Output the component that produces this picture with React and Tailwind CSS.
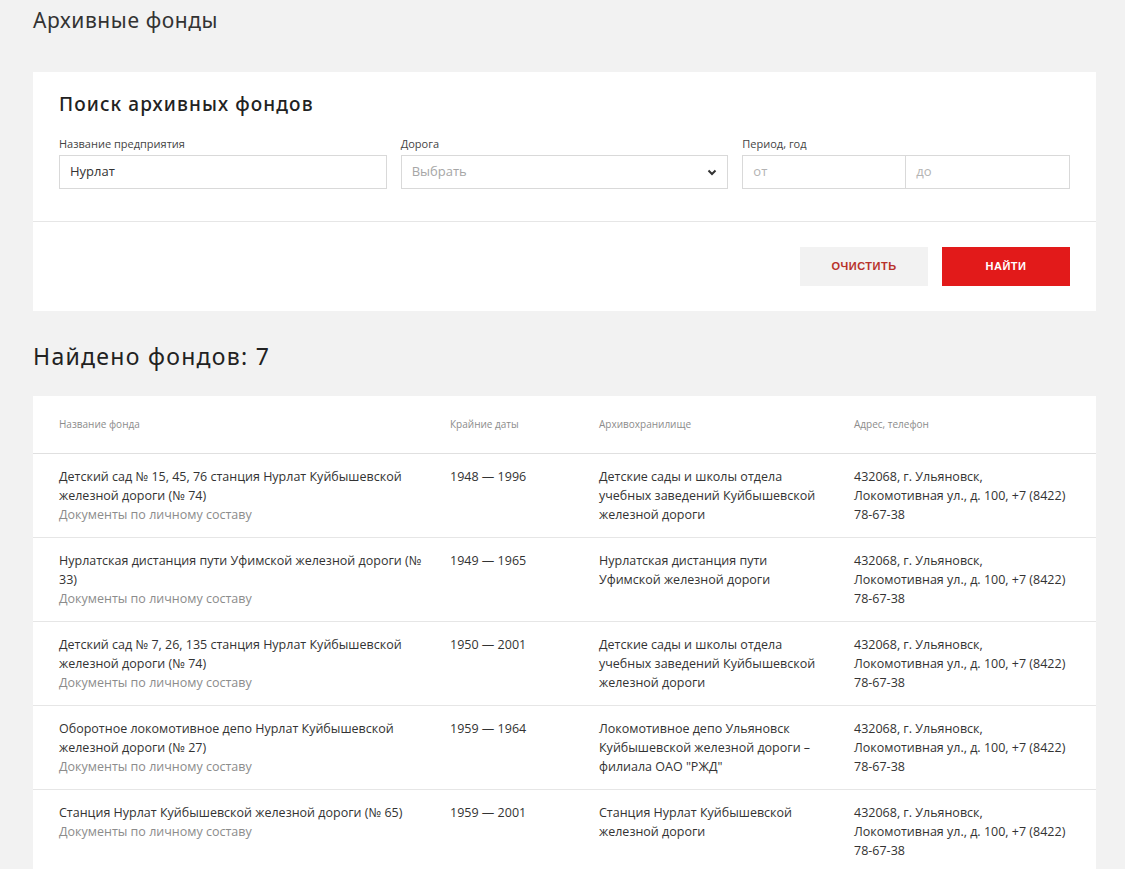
import React from 'react';

const rows = [
  {
    name: 'Детский сад № 15, 45, 76 станция Нурлат Куйбышевской железной дороги (№ 74)',
    dates: '1948 — 1996',
    archive: 'Детские сады и школы отдела учебных заведений Куйбышевской железной дороги',
  },
  {
    name: 'Нурлатская дистанция пути Уфимской железной дороги (№ 33)',
    dates: '1949 — 1965',
    archive: 'Нурлатская дистанция пути Уфимской железной дороги',
  },
  {
    name: 'Детский сад № 7, 26, 135 станция Нурлат Куйбышевской железной дороги (№ 74)',
    dates: '1950 — 2001',
    archive: 'Детские сады и школы отдела учебных заведений Куйбышевской железной дороги',
  },
  {
    name: 'Оборотное локомотивное депо Нурлат Куйбышевской железной дороги (№ 27)',
    dates: '1959 — 1964',
    archive: 'Локомотивное депо Ульяновск Куйбышевской железной дороги – филиала ОАО "РЖД"',
  },
  {
    name: 'Станция Нурлат Куйбышевской железной дороги (№ 65)',
    dates: '1959 — 2001',
    archive: 'Станция Нурлат Куйбышевской железной дороги',
  },
];

const grid = 'grid grid-cols-[371px_129px_235px_222px] gap-x-[20px]';

export default function App() {
  return (
    <div className="min-h-screen bg-[#f2f2f2] px-[33px] pt-[6px] pb-10 font-['Open_Sans',sans-serif] text-[#333]">
      <h1 className="text-[21px] leading-[28px] tracking-[0.6px] font-['Noto_Sans',sans-serif] text-[#333]">Архивные фонды</h1>

      {/* Search card */}
      <div className="mt-[38px] bg-white w-[1063px]">
        <div className="px-[26px] pt-[20px] pb-[32px] border-b border-[#e6e6e6]">
          <h2 className="text-[19px] leading-[24px] font-medium tracking-[1.1px] font-['Noto_Sans',sans-serif] text-[#222]">Поиск архивных фондов</h2>
          <div className="mt-[21px] grid grid-cols-3 gap-x-[14px]">
            <div>
              <div className="text-[11px] leading-[14px] text-[#444] mb-[4px]">Название предприятия</div>
              <div className="h-[34px] border border-[#d9d9d9] flex items-center px-[10px] text-[13px] text-[#333]">Нурлат</div>
            </div>
            <div>
              <div className="text-[11px] leading-[14px] text-[#444] mb-[4px]">Дорога</div>
              <div className="h-[34px] border border-[#d9d9d9] flex items-center justify-between px-[10px] text-[13px] text-[#a6a6a6]">
                <span>Выбрать</span>
                <svg width="10" height="7" viewBox="0 0 10 7" fill="none">
                  <path d="M1.5 1.5 L5 5 L8.5 1.5" stroke="#333" strokeWidth="2" />
                </svg>
              </div>
            </div>
            <div>
              <div className="text-[11px] leading-[14px] text-[#444] mb-[4px]">Период, год</div>
              <div className="h-[34px] border border-[#d9d9d9] grid grid-cols-2 text-[13px] text-[#b3b3b3]">
                <div className="flex items-center px-[10px] border-r border-[#d9d9d9]">от</div>
                <div className="flex items-center px-[10px]">до</div>
              </div>
            </div>
          </div>
        </div>
        <div className="flex justify-end gap-[14px] px-[26px] pt-[25px] pb-[25px]">
          <button className="w-[128px] h-[39px] bg-[#f2f2f2] text-[#b8322b] text-[11px] font-bold tracking-[0.5px] font-['Liberation_Sans',sans-serif]">ОЧИСТИТЬ</button>
          <button className="w-[128px] h-[39px] bg-[#e21a1a] text-white text-[11px] font-bold tracking-[0.5px] font-['Liberation_Sans',sans-serif]">НАЙТИ</button>
        </div>
      </div>

      <h2 className="mt-[31px] text-[23px] leading-[28px] tracking-[1.3px] font-['Noto_Sans',sans-serif] text-[#222]">Найдено фондов: 7</h2>

      {/* Results table */}
      <div className="mt-[26px] bg-white w-[1063px] px-[26px]">
        <div className={`${grid} h-[58px] items-center text-[10px] text-[#8c8c8c] border-b border-[#e0e0e0] -mx-[26px] px-[26px]`}>
          <div>Название фонда</div>
          <div>Крайние даты</div>
          <div>Архивохранилище</div>
          <div>Адрес, телефон</div>
        </div>
        {rows.map((r, i) => (
          <div
            key={i}
            className={`${grid} pt-[13px] pb-[13px] text-[12.5px] leading-[19px] -mx-[26px] px-[26px] ${i < rows.length - 1 ? 'border-b border-[#e6e6e6]' : ''}`}
          >
            <div>
              <div className="text-[#333]">{r.name}</div>
              <div className="text-[#8c8c8c]">Документы по личному составу</div>
            </div>
            <div className="text-[#333]">{r.dates}</div>
            <div className="text-[#333] pr-[12px]">{r.archive}</div>
            <div className="text-[#333]">
              432068, г. Ульяновск,<br />
              Локомотивная ул., д. 100, +7 (8422) 78-67-38
            </div>
          </div>
        ))}
      </div>
    </div>
  );
}
